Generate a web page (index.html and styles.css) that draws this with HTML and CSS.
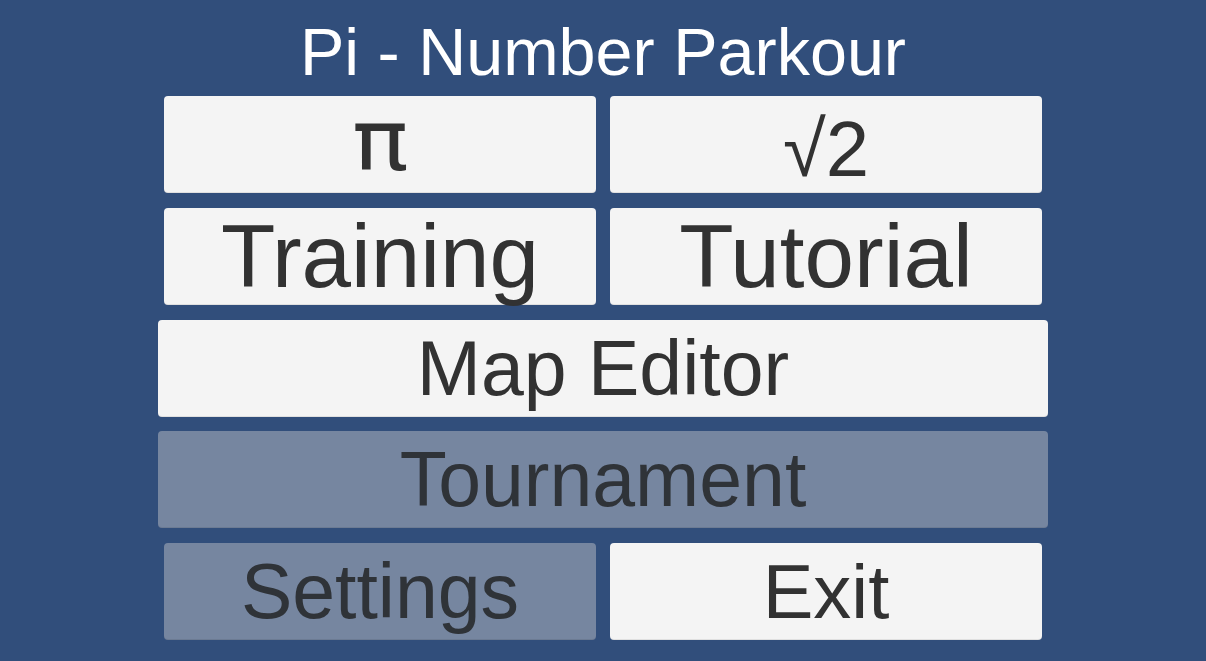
FILE: index.html
```html
<!DOCTYPE html>
<html lang="en">
<head>
<meta charset="utf-8">
<title>Pi - Number Parkour</title>
<link rel="stylesheet" href="styles.css">
</head>
<body>
<main class="menu">
  <h1 class="title">Pi - Number Parkour</h1>
  <div class="buttons">
    <div class="row pair">
      <button class="btn btn-pi"><span class="pi-glyph">π</span></button>
      <button class="btn btn-sqrt">√2</button>
    </div>
    <div class="row pair">
      <button class="btn btn-big">Training</button>
      <button class="btn btn-big">Tutorial</button>
    </div>
    <div class="row">
      <button class="btn">Map Editor</button>
    </div>
    <div class="row">
      <button class="btn btn-disabled">Tournament</button>
    </div>
    <div class="row pair">
      <button class="btn btn-disabled">Settings</button>
      <button class="btn btn-exit">Exit</button>
    </div>
  </div>
</main>
</body>
</html>
```

FILE: styles.css
```css
html, body {
  margin: 0;
  padding: 0;
  height: 100%;
}

body {
  background: #314e7b;
  font-family: "Liberation Sans", Arial, sans-serif;
  overflow: hidden;
}

.menu {
  display: flex;
  flex-direction: column;
  align-items: center;
}

.title {
  margin: 0;
  padding-top: 20px;
  height: 76px;
  font-size: 66.5px;
  line-height: 64px;
  font-weight: normal;
  color: #ffffff;
  text-align: center;
  white-space: nowrap;
}

.buttons {
  width: 890px;
  display: flex;
  flex-direction: column;
  gap: 14.75px;
}

.row {
  display: flex;
  height: 97px;
}

.row.pair {
  padding: 0 6px;
  gap: 14px;
}

.btn {
  flex: 1 1 0;
  min-width: 0;
  margin: 0;
  padding: 0;
  border: none;
  border-radius: 4px;
  background: #f4f4f4;
  color: #323232;
  font-family: "Liberation Sans", Arial, sans-serif;
  font-size: 77px;
  line-height: normal;
  display: flex;
  align-items: center;
  justify-content: center;
  box-shadow: inset 0 -1px 0 rgba(0, 0, 0, 0.08);
}

.btn-big {
  font-size: 89px;
}

.btn-pi {
  font-family: "DejaVu Sans", sans-serif;
  font-size: 84px;
  padding-bottom: 8px;
}

.pi-glyph {
  display: inline-block;
  transform: scaleX(1.12);
}

.btn-sqrt {
  font-size: 78px;
  padding-top: 10px;
}

.btn-exit {
  font-size: 76px;
}

.btn-disabled {
  background: #7686a0;
  color: #2f3338;
}
```
